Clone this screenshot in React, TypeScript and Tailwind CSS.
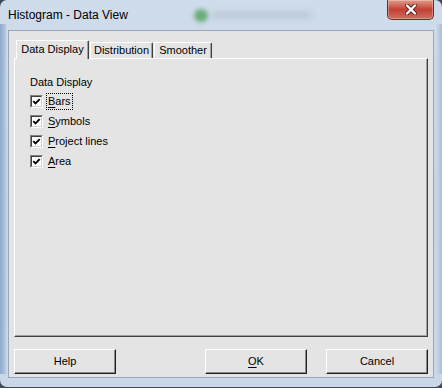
import React from 'react';

// Histogram - Data View dialog (Windows 7 frame, classic controls)

const font = { fontFamily: "'Liberation Sans', Arial, sans-serif" };

const tabs = [
  { label: 'Data Display', active: true, w: 'w-[73px]' },
  { label: 'Distribution', active: false, w: 'w-[63px]' },
  { label: 'Smoother', active: false, w: 'w-[58px]' },
];

const options = [
  { key: 'B', rest: 'ars', focus: true },
  { key: 'S', rest: 'ymbols', focus: false },
  { key: 'P', rest: 'roject lines', focus: false },
  { key: 'A', rest: 'rea', focus: false },
];

const CheckBox: React.FC = () => (
  <div className="w-[13px] h-[13px] border border-t-[#808080] border-l-[#808080] border-r-white border-b-white flex-shrink-0">
    <div className="w-full h-full border border-t-[#404040] border-l-[#404040] border-r-[#d4d0c8] border-b-[#d4d0c8] bg-white flex items-center justify-center">
      <svg width="9" height="9" viewBox="0 0 9 9">
        <path d="M1.3 4.2 L3.5 6.4 L7.7 2.1" fill="none" stroke="#000" strokeWidth="1.9" />
      </svg>
    </div>
  </div>
);

const Button: React.FC<{ children: React.ReactNode }> = ({ children }) => (
  <button className="w-[102px] h-[25px] bg-[#e4e4e4] border border-t-white border-l-white border-r-[#202020] border-b-[#202020] shadow-[inset_-1px_-1px_0_#8a8a8a] text-[11px] text-black leading-none">
    {children}
  </button>
);

export default function App() {
  return (
    <div className="w-[442px] h-[388px] bg-[#3d4a5a]" style={font}>
      <div className="w-[442px] h-[387px] rounded-[7px] bg-gradient-to-b from-[#cfdceb] via-[#c3d4e7] to-[#c9d8e9] flex flex-col relative overflow-hidden">
        {/* left frame streaks */}
        <div className="absolute left-0 top-[24px] w-[6px] h-[350px] bg-gradient-to-r from-[#8fa9c8] to-[#b6cae0]" />
        <div className="absolute right-0 top-[24px] w-[6px] h-[350px] bg-gradient-to-l from-[#aabfd8] to-[#cbd9e9]" />

        {/* Title bar */}
        <div className="h-[30px] relative flex items-center pl-[8px] pb-[1px]">
          <div className="absolute left-[194px] top-[9px] w-[14px] h-[13px] rounded-full bg-[#3f9a4a] blur-[2px] opacity-70" />
          <div className="absolute left-[212px] top-[12px] w-[100px] h-[6px] rounded bg-[#8a949e] blur-[3px] opacity-30" />
          <span className="relative text-[12px] text-black">Histogram - Data View</span>
          <div className="absolute right-[8px] top-0 w-[47px] h-[20px] rounded-b-[5px] border border-t-0 border-[#6e2b25] bg-gradient-to-b from-[#e09a88] via-[#c23f34] to-[#cf6e60] shadow-[inset_0_0_0_1px_rgba(255,255,255,0.3)] flex items-center justify-center">
            <svg width="14" height="11" viewBox="0 0 14 11">
              <path d="M3 1.5 L11 9.5 M11 1.5 L3 9.5" stroke="#5a1f1a" strokeWidth="4" strokeLinecap="round" />
              <path d="M3 1.5 L11 9.5 M11 1.5 L3 9.5" stroke="#ffffff" strokeWidth="2.4" strokeLinecap="round" />
            </svg>
          </div>
        </div>

        {/* Client area */}
        <div className="mx-[8px] h-[348px] border border-[#97a8bb] bg-[#e4e4e4] px-[5px] pt-[8px] flex flex-col">
          {/* Tabs */}
          <div className="h-[19px] flex items-end pl-[2px] relative z-10">
            {tabs.map((t) =>
              t.active ? (
                <div
                  key={t.label}
                  className={`${t.w} h-[19px] -mb-px bg-[#e4e4e4] border-t border-l border-t-white border-l-white border-r border-r-[#404040] shadow-[inset_-1px_0_0_#a0a0a0] rounded-tr-[2px] flex justify-center pt-[2px] text-[11px] text-black leading-[13px]`}
                >
                  {t.label}
                </div>
              ) : (
                <div
                  key={t.label}
                  className={`${t.w} h-[16px] ml-[1px] bg-[#e4e4e4] border-t border-l border-t-white border-l-white border-r border-r-[#404040] shadow-[inset_-1px_0_0_#a0a0a0] rounded-tr-[2px] flex justify-center pt-[1px] text-[11px] text-black leading-[13px]`}
                >
                  {t.label}
                </div>
              )
            )}
          </div>

          {/* Panel */}
          <div className="h-[279px] border border-t-white border-l-white border-r-[#404040] border-b-[#404040] shadow-[inset_-1px_-1px_0_#a0a0a0] pl-[15px] pt-[17px]">
            <div className="text-[11px] leading-[13px] text-black">Data Display</div>
            <div className="mt-[2px] flex flex-col">
              {options.map((o) => (
                <div key={o.key} className="h-[20px] flex items-center gap-[3px]">
                  <CheckBox />
                  <span
                    className={`h-[17px] px-px flex items-center text-[11px] text-black border ${
                      o.focus ? 'border-dotted border-black' : 'border-transparent'
                    }`}
                  >
                    <span className="underline underline-offset-2">{o.key}</span>
                    {o.rest}
                  </span>
                </div>
              ))}
            </div>
          </div>

          {/* Buttons */}
          <div className="mt-[12px] flex items-start">
            <Button>Help</Button>
            <div className="flex-1" />
            <div className="flex gap-[19px]">
              <Button>
                <span className="underline underline-offset-2">O</span>K
              </Button>
              <Button>Cancel</Button>
            </div>
          </div>
        </div>
      </div>
    </div>
  );
}
